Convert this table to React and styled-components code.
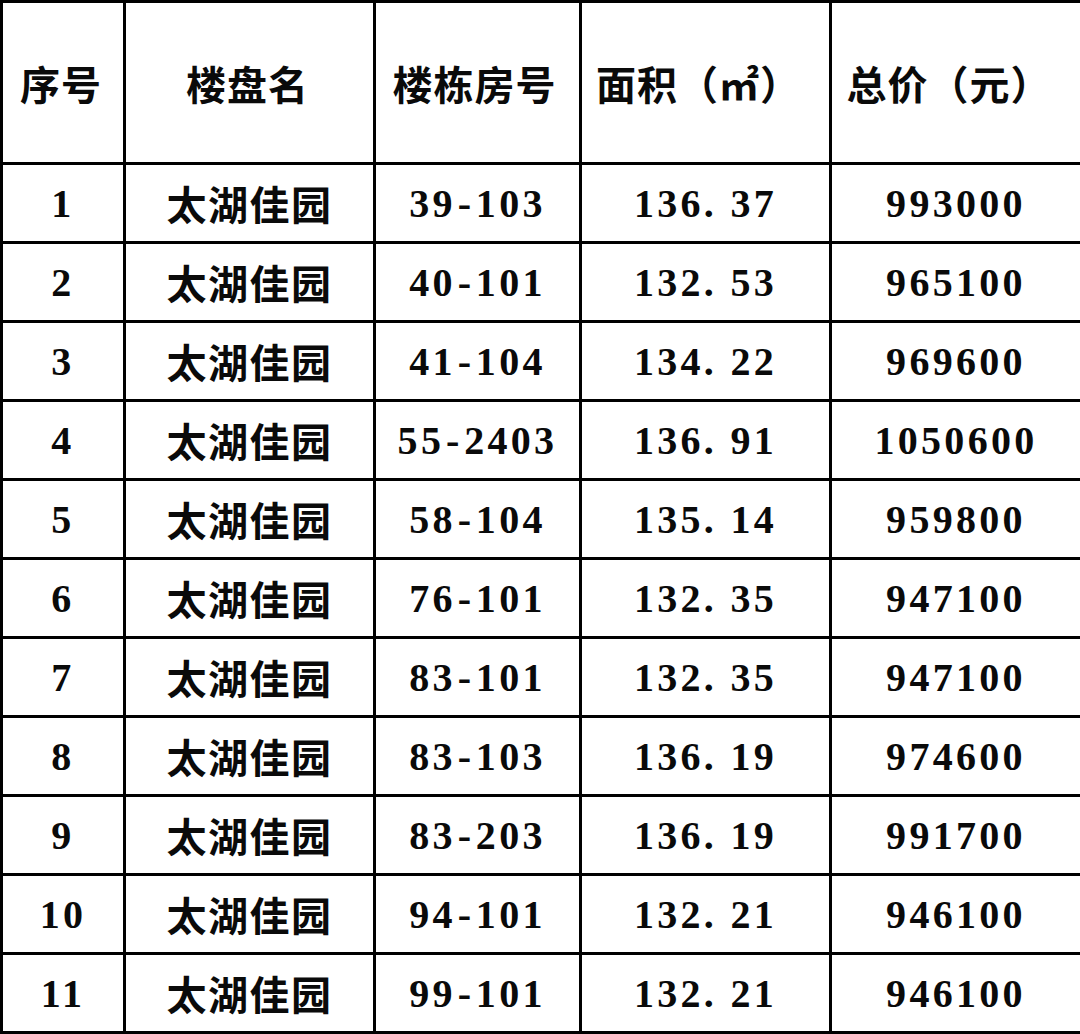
import styled, { createGlobalStyle } from "styled-components";

const GlobalStyle = createGlobalStyle`
  html, body {
    margin: 0;
    padding: 0;
    background: #ffffff;
  }
`;

const Table = styled.table`
  width: 1080px;
  border-collapse: collapse;
  table-layout: fixed;
  font-family: "Liberation Serif", "Noto Sans CJK SC", serif;
  font-weight: 700;
  color: #0a0a0a;
`;

const HeadRow = styled.tr`
  height: 162px;
`;

const Row = styled.tr`
  height: 79px;
`;

const Th = styled.th`
  border: 3px solid #000;
  font-size: 40px;
  font-weight: 700;
  text-align: center;
  padding: 0 ${(props) => props.$shift || 0}px 0 0;
  letter-spacing: 1px;
`;

const Td = styled.td`
  border: 3px solid #000;
  font-size: 40px;
  text-align: center;
  padding: 0;
  letter-spacing: ${(props) => (props.$cjk ? "1.5px" : "3.3px")};
`;

const Dash = styled.span`
  display: inline-block;
  width: 17px;
  text-align: center;
  letter-spacing: 0;
  margin-right: 3px;
  font-weight: 900;
`;

const rows = [
  ["1", "39-103", "136. 37", "993000"],
  ["2", "40-101", "132. 53", "965100"],
  ["3", "41-104", "134. 22", "969600"],
  ["4", "55-2403", "136. 91", "1050600"],
  ["5", "58-104", "135. 14", "959800"],
  ["6", "76-101", "132. 35", "947100"],
  ["7", "83-101", "132. 35", "947100"],
  ["8", "83-103", "136. 19", "974600"],
  ["9", "83-203", "136. 19", "991700"],
  ["10", "94-101", "132. 21", "946100"],
  ["11", "99-101", "132. 21", "946100"],
];

function RoomNo({ value }) {
  const [building, room] = value.split("-");
  return (
    <>
      {building}
      <Dash>-</Dash>
      {room}
    </>
  );
}

export default function App() {
  return (
    <>
      <GlobalStyle />
      <Table>
        <colgroup>
          <col style={{ width: 123 }} />
          <col style={{ width: 250 }} />
          <col style={{ width: 206 }} />
          <col style={{ width: 250 }} />
          <col style={{ width: 251 }} />
        </colgroup>
        <thead>
          <HeadRow>
            <Th $shift={4}>序号</Th>
            <Th $shift={4}>楼盘名</Th>
            <Th $shift={6}>楼栋房号</Th>
            <Th $shift={14}>面积（㎡）</Th>
            <Th $shift={14}>总价（元）</Th>
          </HeadRow>
        </thead>
        <tbody>
          {rows.map((r) => (
            <Row key={r[0]}>
              <Td>{r[0]}</Td>
              <Td $cjk>太湖佳园</Td>
              <Td>
                <RoomNo value={r[1]} />
              </Td>
              <Td>{r[2]}</Td>
              <Td>{r[3]}</Td>
            </Row>
          ))}
        </tbody>
      </Table>
    </>
  );
}
